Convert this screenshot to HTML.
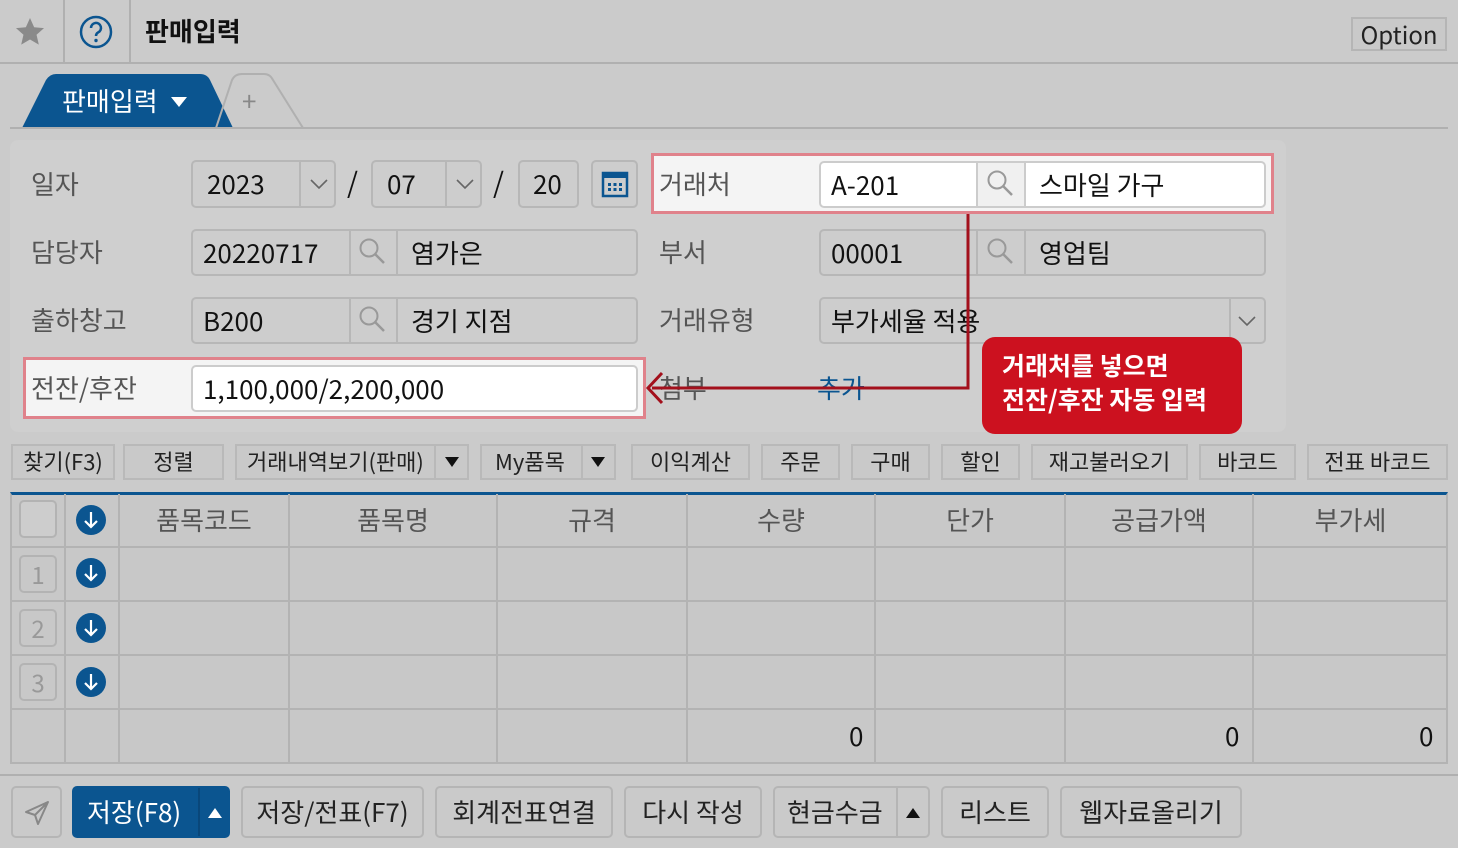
<!DOCTYPE html>
<html><head><meta charset="utf-8">
<style>
*{box-sizing:border-box;margin:0;padding:0}
body{width:1458px;height:848px;background:#cbcbcb;font-family:"Noto Sans CJK KR","Liberation Sans",sans-serif;position:relative;overflow:hidden;color:#111}
.a{position:absolute}
.lbl{position:absolute;font-size:26px;color:#555;line-height:30px}
.inp{position:absolute;border:2px solid #b7b7b7;border-radius:5px;background:#cdcdcd;font-size:26px;line-height:43px;color:#111;overflow:hidden}
.inp .d{position:absolute;top:0;bottom:0;border-left:2px solid #b7b7b7}
.inp span{position:absolute;top:0}
.btn{position:absolute;border:2px solid #b9b9b9;background:#c9c9c9;font-size:22px;line-height:31px;text-align:center;color:#222}
.bb{position:absolute;border:2px solid #b5b5b5;border-radius:5px;background:#cacaca;font-size:26px;line-height:47px;text-align:center;color:#222}
.hl{position:absolute;border:3px solid #e0828b;background:#f4f4f4}
.th{position:absolute;font-size:26px;color:#555;text-align:center;line-height:52px}
.vl{position:absolute;top:494px;height:270px;border-left:2px solid #b3b3b3}
.hr{position:absolute;left:10px;width:1438px;border-top:2px solid #b3b3b3}
.rn{position:absolute;left:19px;width:38px;height:38px;border:2px solid #b3b3b3;border-radius:5px;font-size:24px;color:#999;text-align:center;line-height:34px}
</style></head><body>
<div class="a" style="left:0;top:62px;width:1458px;border-top:2px solid #b0b0b0"></div>
<div class="a" style="left:63px;top:0;height:62px;border-left:2px solid #b0b0b0"></div>
<div class="a" style="left:129px;top:0;height:62px;border-left:2px solid #b0b0b0"></div>
<svg class="a" style="left:13px;top:16px" width="34" height="32" viewBox="0 0 24 24"><path d="M12 1.5l3.1 6.9 7.4.7-5.6 5 1.7 7.4L12 17.6 5.4 21.5l1.7-7.4-5.6-5 7.4-.7z" fill="#8a8a8a"/></svg>
<svg class="a" style="left:78px;top:14px" width="36" height="36" viewBox="0 0 36 36"><circle cx="18" cy="18" r="15" fill="none" stroke="#0b5590" stroke-width="2.5"/><path d="M13 14a5 5 0 1 1 7 4.5c-1.5.8-2 1.6-2 3.5" fill="none" stroke="#0b5590" stroke-width="2.5"/><circle cx="18" cy="26.5" r="1.7" fill="#0b5590"/></svg>
<div class="a" style="left:145px;top:12px;font-size:26px;font-weight:bold;line-height:38px">판매입력</div>
<div class="a" style="left:1351px;top:17px;width:96px;height:34px;border:2px solid #b5b5b5;background:#c9c9c9;font-size:24px;line-height:30px;text-align:center;color:#222">Option</div>
<svg class="a" style="left:0;top:70px" width="320" height="62"><path d="M22 58 L46 10 Q50 4 56 4 L200 4 Q207 4 210 10 L233 58 Z" fill="#0b5590"/><path d="M216 58 L232 10 Q235 4 242 4 L264 4 Q270 4 273 10 L303 58" fill="none" stroke="#b0b0b0" stroke-width="2"/></svg>
<div class="a" style="left:62px;top:84px;font-size:26px;color:#fff;line-height:34px">판매입력</div>
<svg class="a" style="left:170px;top:96px" width="18" height="12"><path d="M1 1h16L9 11z" fill="#fff"/></svg>
<div class="a" style="left:242px;top:86px;font-size:26px;color:#888;line-height:30px">+</div>
<div class="a" style="left:10px;top:127px;width:1438px;border-top:2px solid #b0b0b0"></div>
<div class="a" style="left:10px;top:140px;width:1276px;height:292px;background:#cfcfcf;border-radius:8px"></div>
<div class="hl" style="left:651px;top:153px;width:623px;height:61px"></div>
<div class="hl" style="left:23px;top:357px;width:623px;height:62px"></div>
<div class="lbl" style="left:31px;top:169px">일자</div>
<div class="inp" style="left:191px;top:160px;width:145px;height:48px"><span style="left:14px">2023</span><div class="d" style="left:106px"></div><svg class="a" style="left:116px;top:16px" width="20" height="12"><path d="M2 2l8 8 8-8" fill="none" stroke="#666" stroke-width="1.6"/></svg></div>
<div class="a" style="left:347px;top:166px;font-size:28px;line-height:32px">/</div>
<div class="inp" style="left:371px;top:160px;width:111px;height:48px"><span style="left:14px">07</span><div class="d" style="left:72px"></div><svg class="a" style="left:82px;top:16px" width="20" height="12"><path d="M2 2l8 8 8-8" fill="none" stroke="#666" stroke-width="1.6"/></svg></div>
<div class="a" style="left:493px;top:166px;font-size:28px;line-height:32px">/</div>
<div class="inp" style="left:518px;top:160px;width:61px;height:48px"><span style="left:13px">20</span></div>
<div class="inp" style="left:591px;top:160px;width:47px;height:48px"><svg class="a" style="left:8px;top:8px" width="28" height="28" viewBox="0 0 28 28"><rect x="2" y="3" width="24" height="23" fill="none" stroke="#0b5590" stroke-width="2.5"/><rect x="2" y="3" width="24" height="5" fill="#0b5590"/><g fill="#0b5590"><rect x="7" y="13" width="3" height="3"/><rect x="12.5" y="13" width="3" height="3"/><rect x="18" y="13" width="3" height="3"/><rect x="7" y="18" width="3" height="3"/><rect x="12.5" y="18" width="3" height="3"/><rect x="18" y="18" width="3" height="3"/></g></svg></div>
<div class="lbl" style="left:659px;top:169px">거래처</div>
<div class="inp" style="left:819px;top:161px;width:447px;height:47px;background:#fff;border-color:#ccc"><span style="left:10px">A-201</span><div class="d" style="left:155px;border-color:#ccc"></div><div class="a" style="left:157px;top:0;width:46px;height:47px;background:#f0f0f0"></div><div class="d" style="left:203px;border-color:#ccc"></div><span style="left:218px">스마일 가구</span></div>
<div class="lbl" style="left:31px;top:237px">담당자</div>
<div class="inp" style="left:191px;top:229px;width:447px;height:47px"><span style="left:10px">20220717</span><div class="d" style="left:156px"></div><div class="d" style="left:203px"></div><span style="left:218px">염가은</span></div>
<div class="lbl" style="left:659px;top:237px">부서</div>
<div class="inp" style="left:819px;top:229px;width:447px;height:47px"><span style="left:10px">00001</span><div class="d" style="left:155px"></div><div class="d" style="left:203px"></div><span style="left:218px">영업팀</span></div>
<div class="lbl" style="left:31px;top:305px">출하창고</div>
<div class="inp" style="left:191px;top:297px;width:447px;height:47px"><span style="left:10px">B200</span><div class="d" style="left:156px"></div><div class="d" style="left:203px"></div><span style="left:218px">경기 지점</span></div>
<div class="lbl" style="left:659px;top:305px">거래유형</div>
<div class="inp" style="left:819px;top:297px;width:447px;height:47px"><span style="left:10px">부가세율 적용</span><div class="d" style="left:408px"></div><svg class="a" style="left:416px;top:16px" width="20" height="12"><path d="M2 2l8 8 8-8" fill="none" stroke="#666" stroke-width="1.6"/></svg></div>
<svg class="a" style="left:357px;top:236px" width="30" height="30"><circle cx="12" cy="12" r="8.5" fill="none" stroke="#999" stroke-width="2"/><path d="M18 18l9 9" stroke="#999" stroke-width="2.5"/></svg>
<svg class="a" style="left:357px;top:304px" width="30" height="30"><circle cx="12" cy="12" r="8.5" fill="none" stroke="#999" stroke-width="2"/><path d="M18 18l9 9" stroke="#999" stroke-width="2.5"/></svg>
<svg class="a" style="left:985px;top:168px" width="30" height="30"><circle cx="12" cy="12" r="8.5" fill="none" stroke="#999" stroke-width="2"/><path d="M18 18l9 9" stroke="#999" stroke-width="2.5"/></svg>
<svg class="a" style="left:985px;top:236px" width="30" height="30"><circle cx="12" cy="12" r="8.5" fill="none" stroke="#999" stroke-width="2"/><path d="M18 18l9 9" stroke="#999" stroke-width="2.5"/></svg>
<div class="lbl" style="left:31px;top:373px">전잔/후잔</div>
<div class="inp" style="left:191px;top:365px;width:447px;height:47px;background:#fff;border-color:#ccc"><span style="left:10px">1,100,000/2,200,000</span></div>
<div class="lbl" style="left:659px;top:373px">첨부</div>
<div class="a" style="left:817px;top:373px;font-size:26px;line-height:30px;color:#0b5590">추가</div>
<svg class="a" style="left:640px;top:210px" width="340" height="200"><path d="M328 4V178H12" fill="none" stroke="#a3101c" stroke-width="3"/><path d="M22 163L8 178 22 193" fill="none" stroke="#a3101c" stroke-width="3"/></svg>
<div class="a" style="left:982px;top:337px;width:260px;height:97px;background:#cc111f;border-radius:13px;color:#fff;font-weight:bold;font-size:25px;line-height:34px;padding:11px 0 0 20px">거래처를 넣으면<br>전잔/후잔 자동 입력</div>
<div class="btn" style="left:11px;top:444px;width:104px;height:36px">찾기(F3)</div>
<div class="btn" style="left:123px;top:444px;width:101px;height:36px">정렬</div>
<div class="btn" style="left:235px;top:444px;width:234px;height:36px;text-align:left;padding-left:10px">거래내역보기(판매)<div class="a" style="left:197px;top:0;height:32px;border-left:2px solid #b9b9b9"></div><svg class="a" style="left:208px;top:11px" width="14" height="10"><path d="M0 0h14L7 10z" fill="#111"/></svg></div>
<div class="btn" style="left:480px;top:444px;width:136px;height:36px;text-align:left;padding-left:13px">My품목<div class="a" style="left:99px;top:0;height:32px;border-left:2px solid #b9b9b9"></div><svg class="a" style="left:109px;top:11px" width="14" height="10"><path d="M0 0h14L7 10z" fill="#111"/></svg></div>
<div class="btn" style="left:631px;top:444px;width:119px;height:36px">이익계산</div>
<div class="btn" style="left:761px;top:444px;width:79px;height:36px">주문</div>
<div class="btn" style="left:851px;top:444px;width:79px;height:36px">구매</div>
<div class="btn" style="left:941px;top:444px;width:79px;height:36px">할인</div>
<div class="btn" style="left:1031px;top:444px;width:157px;height:36px">재고불러오기</div>
<div class="btn" style="left:1199px;top:444px;width:97px;height:36px">바코드</div>
<div class="btn" style="left:1307px;top:444px;width:141px;height:36px">전표 바코드</div>
<div class="a" style="left:10px;top:492px;width:1438px;height:272px;background:#c8c8c8;border:2px solid #b3b3b3;border-top:3px solid #0b5590"></div>
<div class="hr" style="top:546px"></div><div class="hr" style="top:600px"></div><div class="hr" style="top:654px"></div><div class="hr" style="top:708px"></div>
<div class="vl" style="left:64px"></div><div class="vl" style="left:118px"></div><div class="vl" style="left:288px"></div><div class="vl" style="left:496px"></div><div class="vl" style="left:686px"></div><div class="vl" style="left:874px"></div><div class="vl" style="left:1064px"></div><div class="vl" style="left:1252px"></div>
<div class="a" style="left:19px;top:500px;width:38px;height:38px;border:2px solid #b3b3b3;border-radius:5px;background:#cdcdcd"></div>
<div class="th" style="left:119px;top:494px;width:170px">품목코드</div>
<div class="th" style="left:289px;top:494px;width:208px">품목명</div>
<div class="th" style="left:497px;top:494px;width:190px">규격</div>
<div class="th" style="left:687px;top:494px;width:188px">수량</div>
<div class="th" style="left:875px;top:494px;width:190px">단가</div>
<div class="th" style="left:1065px;top:494px;width:188px">공급가액</div>
<div class="th" style="left:1253px;top:494px;width:195px">부가세</div>
<div class="rn" style="top:555px">1</div><div class="rn" style="top:609px">2</div><div class="rn" style="top:663px">3</div>
<svg class="a" style="left:76px;top:505px" width="30" height="230"><g><circle cx="15" cy="15" r="15" fill="#0b5590"/><circle cx="15" cy="68" r="15" fill="#0b5590"/><circle cx="15" cy="123" r="15" fill="#0b5590"/><circle cx="15" cy="177" r="15" fill="#0b5590"/></g><g fill="none" stroke="#fff" stroke-width="2.2"><path d="M15 7v15M9 16l6 6 6-6"/><path d="M15 60v15M9 69l6 6 6-6"/><path d="M15 115v15M9 124l6 6 6-6"/><path d="M15 169v15M9 178l6 6 6-6"/></g></svg>
<div class="a" style="left:849px;top:720px;font-size:26px;line-height:32px">0</div>
<div class="a" style="left:1225px;top:720px;font-size:26px;line-height:32px">0</div>
<div class="a" style="left:1419px;top:720px;font-size:26px;line-height:32px">0</div>
<div class="a" style="left:0;top:774px;width:1458px;border-top:2px solid #b0b0b0"></div>
<div class="bb" style="left:11px;top:786px;width:51px;height:52px"><svg class="a" style="left:11px;top:12px" width="26" height="26" viewBox="0 0 26 26"><path d="M24 2L2 12l9 3 3 9z M11 15L24 2" fill="none" stroke="#888" stroke-width="2" stroke-linejoin="round"/></svg></div>
<div class="bb" style="left:72px;top:786px;width:158px;height:52px;background:#0b5590;border-color:#0b5590;color:#fff;text-align:left;padding-left:13px">저장(F8)<div class="a" style="left:124px;top:0;height:48px;border-left:2px solid #09477a"></div><svg class="a" style="left:134px;top:20px" width="14" height="10"><path d="M0 10h14L7 0z" fill="#fff"/></svg></div>
<div class="bb" style="left:241px;top:786px;width:183px;height:52px">저장/전표(F7)</div>
<div class="bb" style="left:435px;top:786px;width:178px;height:52px">회계전표연결</div>
<div class="bb" style="left:624px;top:786px;width:138px;height:52px">다시 작성</div>
<div class="bb" style="left:773px;top:786px;width:157px;height:52px;text-align:left;padding-left:12px">현금수금<div class="a" style="left:121px;top:0;height:48px;border-left:2px solid #b5b5b5"></div><svg class="a" style="left:131px;top:20px" width="14" height="10"><path d="M0 10h14L7 0z" fill="#111"/></svg></div>
<div class="bb" style="left:941px;top:786px;width:108px;height:52px">리스트</div>
<div class="bb" style="left:1060px;top:786px;width:182px;height:52px">웹자료올리기</div>
</body></html>
